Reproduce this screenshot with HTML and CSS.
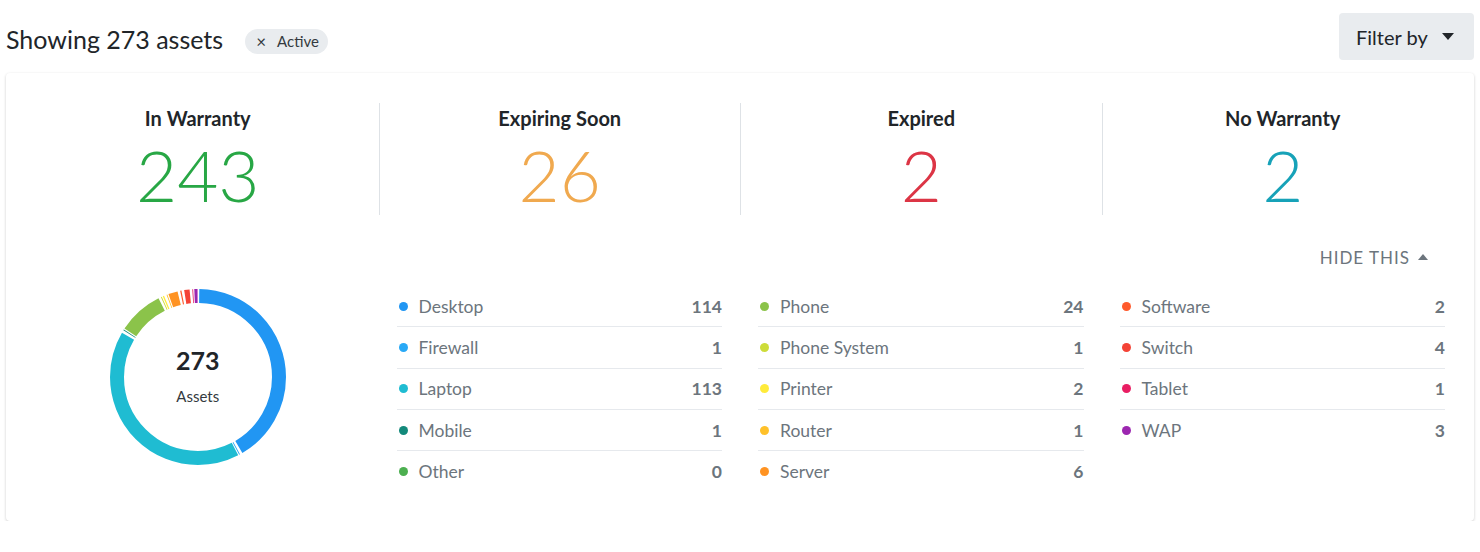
FILE: index.html
```html
<!DOCTYPE html>
<html lang="en">
<head>
  <meta charset="UTF-8">
  <meta name="viewport" content="width=device-width, initial-scale=1.0">
  <title>Assets</title>
  <link rel="stylesheet" href="styles.css">
</head>
<body>
  <div class="page">
    <div class="toolbar">
      <div class="summary">
        <h1 class="summary-title">Showing 273 assets</h1>
        <span class="chip"><span class="chip-x">&times;</span>Active</span>
      </div>
      <button type="button" class="filter-btn">Filter by <span class="caret"></span></button>
    </div>

    <div class="card">
      <div class="stats">
        <div class="stat">
          <div class="stat-label">In Warranty</div>
          <div class="stat-value green">243</div>
        </div>
        <div class="stat">
          <div class="stat-label">Expiring Soon</div>
          <div class="stat-value orange">26</div>
        </div>
        <div class="stat">
          <div class="stat-label">Expired</div>
          <div class="stat-value red">2</div>
        </div>
        <div class="stat">
          <div class="stat-label">No Warranty</div>
          <div class="stat-value teal">2</div>
        </div>
      </div>

      <div class="breakdown-head">
        <a class="toggle" href="#">HIDE THIS <span class="caret-up"></span></a>
      </div>

      <div class="breakdown">
        <div class="donut">
          <svg id="donut" width="176" height="176" viewBox="0 0 176 176"></svg>
          <div class="donut-label">
            <div class="donut-total">273</div>
            <div class="donut-text">Assets</div>
          </div>
        </div>

        <ul class="legend">
          <li><span class="dot" style="background:#2196f3"></span><span class="name">Desktop</span><span class="count">114</span></li>
          <li><span class="dot" style="background:#29a9f6"></span><span class="name">Firewall</span><span class="count">1</span></li>
          <li><span class="dot" style="background:#1fbcd2"></span><span class="name">Laptop</span><span class="count">113</span></li>
          <li><span class="dot" style="background:#13897b"></span><span class="name">Mobile</span><span class="count">1</span></li>
          <li><span class="dot" style="background:#4caf50"></span><span class="name">Other</span><span class="count">0</span></li>
        </ul>

        <ul class="legend">
          <li><span class="dot" style="background:#8bc34a"></span><span class="name">Phone</span><span class="count">24</span></li>
          <li><span class="dot" style="background:#cddc39"></span><span class="name">Phone System</span><span class="count">1</span></li>
          <li><span class="dot" style="background:#ffeb3b"></span><span class="name">Printer</span><span class="count">2</span></li>
          <li><span class="dot" style="background:#ffc12a"></span><span class="name">Router</span><span class="count">1</span></li>
          <li><span class="dot" style="background:#ff9322"></span><span class="name">Server</span><span class="count">6</span></li>
        </ul>

        <ul class="legend">
          <li><span class="dot" style="background:#ff5a2c"></span><span class="name">Software</span><span class="count">2</span></li>
          <li><span class="dot" style="background:#f44336"></span><span class="name">Switch</span><span class="count">4</span></li>
          <li><span class="dot" style="background:#e91e63"></span><span class="name">Tablet</span><span class="count">1</span></li>
          <li><span class="dot" style="background:#9c27b0"></span><span class="name">WAP</span><span class="count">3</span></li>
        </ul>
      </div>
    </div>
  </div>

  <script>
    // draw the ring from the legend rows, in order, clockwise from the top
    const svg = document.getElementById("donut");
    const rows = document.querySelectorAll(".legend li");
    const r = 81;
    const circ = 2 * Math.PI * r;
    let total = 0;
    rows.forEach(row => total += Number(row.querySelector(".count").textContent));

    let offset = 0;
    rows.forEach(row => {
      const value = Number(row.querySelector(".count").textContent);
      if (value === 0) return;
      const len = value / total * circ;
      const dash = Math.max(len - 2.5, 0.8);
      const c = document.createElementNS("http://www.w3.org/2000/svg", "circle");
      c.setAttribute("cx", 88);
      c.setAttribute("cy", 88);
      c.setAttribute("r", r);
      c.setAttribute("fill", "none");
      c.setAttribute("stroke", row.querySelector(".dot").style.background);
      c.setAttribute("stroke-width", 14);
      c.setAttribute("stroke-dasharray", dash + " " + (circ - dash));
      c.setAttribute("stroke-dashoffset", -(offset + 1.25));
      c.setAttribute("transform", "rotate(-90 88 88)");
      svg.appendChild(c);
      offset += len;
    });
  </script>
</body>
</html>
```

FILE: styles.css
```css
body {
  margin: 0;
  padding: 0;
  font-family: Lato, "Open Sans", sans-serif;
  background-color: white;
  color: #212529;
}
.page {
  padding: 13px 6px 0 6px;
}
.toolbar {
  display: flex;
  justify-content: space-between;
  align-items: center;
}
.summary {
  display: flex;
  align-items: center;
  gap: 22px;
  padding-top: 5px;
}
.summary-title {
  margin: 0;
  font-size: 25px;
  font-weight: 400;
  color: #212529;
}
.chip {
  display: inline-flex;
  align-items: center;
  height: 25px;
  padding: 0 9px 0 11px;
  border-radius: 13px;
  background-color: #e9ecef;
  font-size: 15px;
  color: #343a40;
  margin-top: 4px;
}
.chip-x {
  font-size: 17px;
  margin-right: 11px;
}
.filter-btn {
  display: flex;
  align-items: center;
  height: 47px;
  width: 135px;
  padding: 0 17px;
  border: none;
  border-radius: 4px;
  background-color: #e9ecef;
  font-family: Lato, sans-serif;
  font-size: 20px;
  color: #212529;
  cursor: pointer;
}
.caret {
  width: 0;
  height: 0;
  margin-left: 14px;
  border-left: 6.5px solid transparent;
  border-right: 6.5px solid transparent;
  border-top: 7px solid #212529;
}
.card {
  margin-top: 13px;
  padding: 30px 11px 30px 11px;
  background-color: white;
  border-radius: 4px;
  box-shadow: 0px 1px 3px rgba(0, 0, 0, 0.2);
}
.stats {
  display: grid;
  grid-template-columns: repeat(4, 1fr);
}
.stat {
  text-align: center;
  padding-bottom: 5px;
}
.stat + .stat {
  border-left: 1px solid #dee2e6;
}
.stat-label {
  font-size: 20px;
  font-weight: 700;
  line-height: 30px;
  color: #212529;
}
.stat-value {
  font-size: 71px;
  font-weight: 300;
  line-height: 1;
  margin-top: 6px;
}
.green { color: #28a745; }
.orange { color: #f0a94f; }
.red { color: #dc3545; }
.teal { color: #17a2b8; }

.breakdown-head {
  display: flex;
  justify-content: flex-end;
  padding: 31px 35px 0 0;
}
.toggle {
  font-size: 17px;
  letter-spacing: 1px;
  line-height: 24px;
  color: #6c757d;
  text-decoration: none;
  display: flex;
  align-items: center;
}
.caret-up {
  width: 0;
  height: 0;
  margin-left: 8px;
  margin-bottom: 2px;
  border-left: 5px solid transparent;
  border-right: 5px solid transparent;
  border-bottom: 6px solid #6c757d;
}
.breakdown {
  display: grid;
  grid-template-columns: repeat(4, 1fr);
  margin-top: 16px;
}
.donut {
  display: grid;
  justify-content: center;
  justify-items: center;
  align-items: center;
  align-self: start;
  margin-top: 3px;
}
.donut svg,
.donut-label {
  grid-area: 1 / 1;
}
.donut-label {
  text-align: center;
  margin-bottom: 5px;
}
.donut-total {
  font-size: 25px;
  font-weight: 700;
  color: #212529;
}
.donut-text {
  font-size: 15px;
  color: #343a40;
  margin-top: 12px;
}
.legend {
  list-style: none;
  margin: 0;
  padding: 0 18px;
}
.legend li {
  display: flex;
  align-items: center;
  height: 40.3px;
  border-bottom: 1px solid #e6e9ed;
  font-size: 17.5px;
  color: #6c757d;
}
.legend li:last-child {
  border-bottom: none;
}
.dot {
  width: 9px;
  height: 9px;
  border-radius: 50%;
  margin: 0 11px 0 2px;
}
.name {
  flex: 1;
}
.count {
  font-weight: 700;
}
```
